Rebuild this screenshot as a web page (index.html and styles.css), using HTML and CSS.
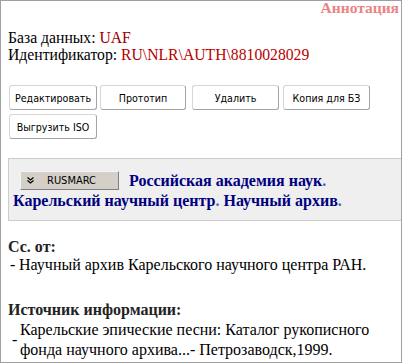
FILE: index.html
```html
<!DOCTYPE html>
<html>
<head>
<meta charset="utf-8">
<link rel="stylesheet" href="styles.css">
</head>
<body>
<div class="frame">
  <div class="title">Аннотация</div>
  <div class="meta">
    <div>База данных: <span class="db">UAF</span></div>
    <div>Идентификатор: <span class="id">RU\NLR\AUTH\8810028029</span></div>
  </div>
  <div class="actions">
    <div class="row">
      <button class="btn b1">Редактировать</button>
      <button class="btn b2">Прототип</button>
      <button class="btn b3">Удалить</button>
      <button class="btn b4">Копия для БЗ</button>
    </div>
    <div class="row">
      <button class="btn b1">Выгрузить ISO</button>
    </div>
  </div>
  <div class="heading"><button class="marc"><svg class="chev" width="7" height="7" viewBox="0 0 7 7"><polyline points="0.5,0.5 3.5,3 6.5,0.5" fill="none" stroke="#000" stroke-width="1.3"/><polyline points="0.5,3.5 3.5,6 6.5,3.5" fill="none" stroke="#000" stroke-width="1.3"/></svg><span>RUSMARC</span></button><span class="org">Российская академия наук<span class="dot">.</span> Карельский научный центр<span class="dot">.</span> Научный архив<span class="dot">.</span></span></div>
  <div class="section s1">
    <div class="label">Сс. от:</div>
    <table class="items"><tr><td class="dash">-</td><td>Научный архив Карельского научного центра РАН.</td></tr></table>
  </div>
  <div class="section s2">
    <div class="label">Источник информации:</div>
    <table class="items"><tr><td class="dash">-</td><td>Карельские эпические песни: Каталог рукописного фонда научного архива...- Петрозаводск,1999.</td></tr></table>
  </div>
</div>
</body>
</html>
```
FILE: styles.css
```css
html, body {
  margin: 0;
  padding: 0;
  background: #fff;
}
.frame {
  box-sizing: border-box;
  width: 402px;
  height: 363px;
  border: 1px solid #a0a0a0;
  overflow: hidden;
  font-family: "Liberation Serif", "Times New Roman", serif;
  font-size: 16px;
  color: #000;
}
.title {
  text-align: right;
  font-weight: bold;
  color: #e88484;
  font-size: 15.5px;
  line-height: 14px;
  padding: 0 2px 0 0;
}
.meta {
  margin-top: 14px;
  padding-left: 7px;
  line-height: 17px;
  font-size: 15.7px;
}
.db { color: #990000; }
.id { color: #b80000; }
.actions {
  margin-top: 22px;
  padding-left: 8px;
  display: flex;
  flex-direction: column;
  gap: 4px;
}
.row {
  display: flex;
}
.btn {
  box-sizing: border-box;
  height: 25px;
  width: 87px;
  background: #fff;
  border: 1px solid #d6d6d6;
  border-right-color: #a4a4a4;
  border-bottom-color: #a4a4a4;
  border-radius: 3px;
  font-family: "DejaVu Sans Condensed", "DejaVu Sans", sans-serif;
  font-size: 10.6px;
  color: #000;
  padding: 0;
}
.b1 { width: 88px; }
.b2 { width: 86px; margin-left: 3px; }
.b3 { width: 87px; margin-left: 6px; }
.b4 { width: 87px; margin-left: 4px; }
.heading {
  margin-top: 19px;
  margin-left: 7px;
  background: #efefef;
  border: 1px solid #cccccc;
  border-right: none;
  padding: 12px 4px 9px 4px;
  font-weight: bold;
  color: #000080;
  font-size: 16px;
  line-height: 20px;
}
.marc {
  box-sizing: border-box;
  width: 99px;
  height: 19px;
  background: #d4d0c8;
  border: 1px solid;
  border-color: #f4f4f4 #808080 #808080 #f4f4f4;
  margin: 0 10px 0 7px;
  padding: 0 0 0 6px;
  display: inline-flex;
  align-items: center;
  vertical-align: top;
  font-family: "DejaVu Sans Condensed", "DejaVu Sans", sans-serif;
  font-size: 11px;
  font-weight: normal;
  color: #000;
}
.marc span { margin-left: 13px; }
.dot { color: #5555aa; }
.section {
  padding-left: 7px;
}
.s1 { margin-top: 17px; }
.s2 { margin-top: 26px; }
.label {
  font-weight: bold;
  color: #222;
  line-height: 18px;
}
.items {
  border-collapse: collapse;
  line-height: 20px;
}
.s1 .items { margin-top: -1px; }
.s2 .items { margin-top: 1px; }
.items td {
  padding: 0;
  vertical-align: middle;
}
.items td.dash {
  width: 9px;
  padding-left: 2px;
}
.s2 .items td.dash {
  width: 8px;
  padding-left: 4px;
}
```
